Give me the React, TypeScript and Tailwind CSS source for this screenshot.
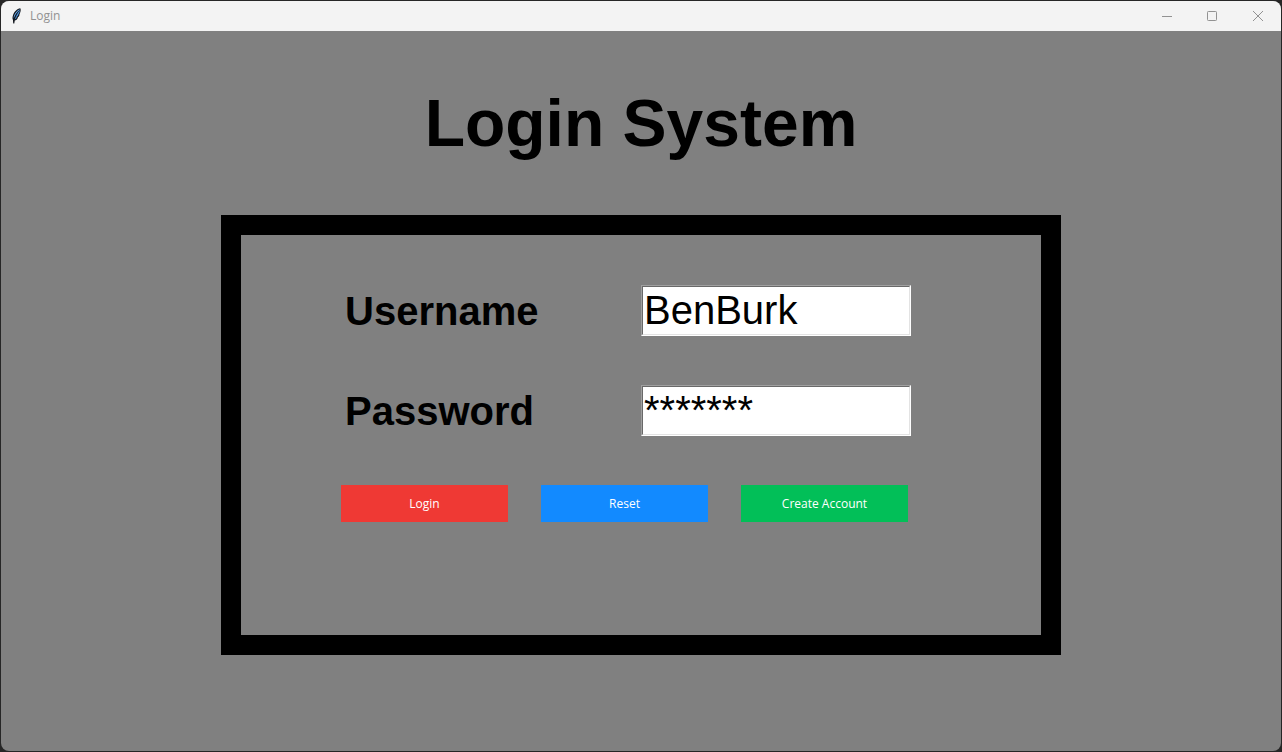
import { useState } from "react";
import type { FormEvent } from "react";

const fieldClass =
  "h-[51px] w-[270px] border border-t-[#a0a0a0] border-r-white border-b-white border-l-[#a0a0a0]";
const inputClass =
  "block h-full w-full rounded-none border border-t-[#696969] border-r-[#e3e3e3] border-b-[#e3e3e3] border-l-[#696969] bg-white py-0 pr-0 pl-px font-['Liberation_Sans',Arial,sans-serif] text-[40px] text-black outline-none";
const labelClass = "w-[300px] pl-1 text-[40px] leading-[53px] font-bold";
const buttonClass = "h-[37px] w-[167px] font-['Open_Sans',sans-serif] text-xs text-white";

function FeatherIcon() {
  return (
    <svg width="16" height="16" viewBox="0 0 16 16" aria-hidden="true">
      <path
        d="M11.300.3C8.200.6 4.800 4 3.800 8c-.4 1.500-.4 2.900.1 3.800l.4 3.700h1l.3-2.900c1.500-.2 2.800-1.300 3.300-2.800l-.2-.3c1.200-.7 1.700-1.700 1.900-2.900l-.3-.1c1.100-1.700 2-4.600 1-6.200Z"
        fill="#10151c"
      />
      <path d="M10.500 1.200C8 2.500 5.700 5.200 4.800 8.500l-.1 2C6 7.300 7.500 4.500 10.600 1.900Z" fill="#6bb2f5" />
      <path d="M10.700 2.300C8.800 4.500 7 7.500 5.600 11.500c1.200-.4 1.900-1.200 2.200-2.200l-.3-.4c1.300-.6 1.700-1.500 1.900-2.600 1-1.200 1.500-2.900 1.300-4Z" fill="#4a8fd6" />
      <path d="M9.800 2.700C7.300 5.500 5.600 9 4.700 14.500" fill="none" stroke="#10151c" strokeWidth="0.5" />
    </svg>
  );
}

function TitleBar() {
  return (
    <header className="flex h-[30px] shrink-0 items-center justify-between bg-[#f3f3f3] text-[#929292]">
      <div className="flex items-center gap-[5px] pl-2">
        <FeatherIcon />
        <span className="font-['Open_Sans',sans-serif] text-xs">Login</span>
      </div>
      <div className="flex h-full">
        <button type="button" aria-label="Minimize" className="flex w-[45px] items-center justify-center">
          <svg width="10" height="10" viewBox="0 0 10 10" stroke="currentColor">
            <path d="M0 5.500h10" />
          </svg>
        </button>
        <button type="button" aria-label="Maximize" className="flex w-[46px] items-center justify-center">
          <svg width="10" height="10" viewBox="0 0 10 10" fill="none" stroke="currentColor">
            <rect x="0.5" y="0.5" width="9" height="9" rx="0.8" />
          </svg>
        </button>
        <button type="button" aria-label="Close" className="flex w-[46px] items-center justify-center">
          <svg width="10" height="10" viewBox="0 0 10 10" stroke="currentColor">
            <path d="M0 0l10 10M10 0L0 10" />
          </svg>
        </button>
      </div>
    </header>
  );
}

export default function App() {
  const [username, setUsername] = useState("BenBurk");
  const [password, setPassword] = useState("*******");

  const submit = (event: FormEvent) => event.preventDefault();
  const reset = () => {
    setUsername("");
    setPassword("");
  };

  return (
    <div className="flex min-h-screen flex-col bg-[#262626] p-px font-['Liberation_Sans',Arial,sans-serif] text-black">
      <div className="flex grow flex-col overflow-hidden rounded-lg bg-[#808080]">
        <TitleBar />
        <main className="flex grow flex-col items-center pt-[54px] pb-24">
          <h1 className="text-[66px] leading-[76px] font-bold">Login System</h1>
          <form
            onSubmit={submit}
            className="mt-[54px] flex w-full max-w-[840px] flex-col border-20 border-black px-[100px] pt-[50px] pb-[113px]"
          >
            <div className="flex h-[51px]">
              <label htmlFor="username" className={labelClass}>
                Username
              </label>
              <div className={fieldClass}>
                <input
                  id="username"
                  type="text"
                  className={inputClass}
                  value={username}
                  onChange={(event) => setUsername(event.target.value)}
                />
              </div>
            </div>
            <div className="mt-[49px] flex h-[51px]">
              <label htmlFor="password" className={labelClass}>
                Password
              </label>
              <div className={fieldClass}>
                <input
                  id="password"
                  type="text"
                  autoComplete="off"
                  className={inputClass}
                  value={password}
                  onChange={(event) => setPassword("*".repeat(event.target.value.length))}
                />
              </div>
            </div>
            <div className="mt-[49px] flex gap-[33px]">
              <button type="submit" className={`${buttonClass} bg-[#ef3934]`}>
                Login
              </button>
              <button type="button" onClick={reset} className={`${buttonClass} bg-[#128aff]`}>
                Reset
              </button>
              <button type="button" className={`${buttonClass} bg-[#02bf58]`}>
                Create Account
              </button>
            </div>
          </form>
        </main>
      </div>
    </div>
  );
}
